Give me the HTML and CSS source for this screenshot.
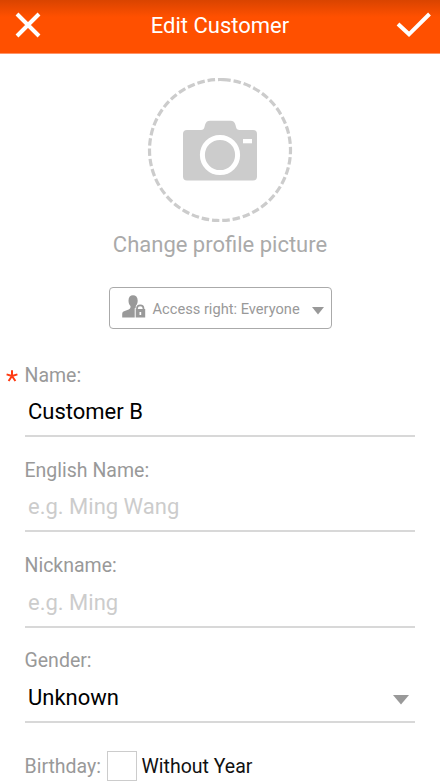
FILE: index.html
```html
<!DOCTYPE html>
<html lang="en">
<head>
<meta charset="utf-8">
<title>Edit Customer</title>
<link rel="stylesheet" href="styles.css">
</head>
<body>
<header class="bar">
  <svg class="close" width="26" height="26" viewBox="0 0 26 26"><path d="M2 2 24 24M24 2 2 24"/></svg>
  <h1><span>Edit Customer</span></h1>
  <svg class="check" width="36" height="26" viewBox="0 0 36 26"><path d="M2 12 13 22.300 33.500 2"/></svg>
</header>
<main>
  <section class="profile">
    <svg class="photo" width="146" height="146" viewBox="0 0 146 146">
      <circle class="ring" cx="73" cy="73" r="70.500" transform="rotate(-87.300 73 73)"/>
      <path class="fill" d="M40 53h14q3 0 3.500-3l.5-2q1-4.300 5-4.300h20.500q4 0 5 4.300l.5 2q.5 3 3.500 3h13.500q4 0 4 4v42.500q0 4-4 4H40q-4 0-4-4V57q0-4 4-4z"/>
      <circle class="lens" cx="73" cy="78" r="17.600"/>
      <path class="flash" d="M96 62h9v4.300h-9z"/>
    </svg>
    <p class="change"><span>Change profile picture</span></p>
    <button class="access">
      <svg width="24" height="24" viewBox="0 0 24 24">
        <path class="person" d="M6.500 5.500C6.500 2 8.300.3 11 .3s4.700 1.700 4.700 5.200c0 2.800-.8 4.300-1.900 5.500v2.500l.6 1.200V22.500H.2v-3.300c0-2 .8-2.600 2.500-3.200l4-1.500q1.800-.6 1.800-2.200V11c-1.300-1.300-2-3-2-5.500z"/>
        <path class="gap" d="M12.700 13.300h1q.2-4.500 4.800-4.500t4.800 4.500h1V24H12.700z"/>
        <path class="shackle" d="M15 14.500v-1c0-4.300 6.500-4.300 6.500 0v1"/>
        <path class="person" d="M13.700 14h9.500v8.500h-9.500z"/>
        <path class="hole" d="M17.500 17h1.700v3h-1.700z"/>
      </svg>
      <span class="atext">Access right: Everyone</span>
      <svg class="caret" width="12" height="8" viewBox="0 0 12 8"><path d="M0 0h12L6 7.500z"/></svg>
    </button>
  </section>
  <form>
    <div class="field"><label><svg class="star" width="12" height="12" viewBox="0 0 12 12"><path d="M6 6V.3M6 6 .6 4.400M6 6l5.400-1.600M6 6 2.600 11M6 6l3.400 5"/></svg>Name:</label><div class="value">Customer B</div></div>
    <div class="field"><label>English Name:</label><div class="value hint">e.g. Ming Wang</div></div>
    <div class="field"><label>Nickname:</label><div class="value hint">e.g. Ming</div></div>
    <div class="field"><label>Gender:</label><div class="value">Unknown<svg class="arrow" width="16" height="10" viewBox="0 0 16 10"><path d="M0 0h16L8 9.500z"/></svg></div></div>
    <div class="birthday"><span class="blabel">Birthday:</span><i class="box"></i><span class="without">Without Year</span></div>
  </form>
</main>
</body>
</html>
```
FILE: styles.css
```css
* { box-sizing: border-box; }
body { margin: 0; height: 782px; overflow: hidden; background: #fff; font-family: Roboto, sans-serif; color: #111; }
svg { display: block; flex: none; }
.bar { height: 54px; padding: 0 10px 3px 15px; display: flex; align-items: center; background: linear-gradient(#d94400, #ff5000 17px); border-bottom: 1px solid #ff9468; }
.bar h1 { flex: 1; margin: 0; padding: 1px 0 0 3px; text-align: center; font-size: 22px; line-height: 28px; font-weight: 400; color: #fff; }
.bar path { fill: none; stroke: #fff; stroke-width: 4; }
.bar .check { margin-right: -2px; }
.profile { display: flex; flex-direction: column; align-items: center; padding-top: 23px; }
.ring { fill: none; stroke: #ccc; stroke-width: 3.200; stroke-dasharray: 7.500 2.900; }
.fill { fill: #ccc; }
.lens { fill: #ccc; stroke: #fff; stroke-width: 5; }
.flash { fill: #fff; }
.change { margin: 8px 0 0; font-size: 22px; line-height: 28px; color: #aaa; }
.access { width: 223px; height: 42px; margin: 28px 0 0; padding: 0 7px 0 12px; border: 1.500px solid #aaa; border-radius: 4px; background: #fff; display: flex; align-items: center; font-family: inherit; font-size: 14.650px; color: #999; }
.access > svg:first-child { margin-top: -3px; }
.atext { margin: 2px 0 0 7px; white-space: nowrap; }
.caret { margin: 6px 0 0 auto; }
.person, .caret path, .arrow path { fill: #999; }
.gap, .hole { fill: #fff; }
.shackle { fill: none; stroke: #999; stroke-width: 1.700; }
form { padding: 32px 25px 0 24.500px; }
.field { height: 95.300px; }
.field label { display: block; position: relative; padding-top: .6px; font-size: 19.500px; line-height: 27.400px; color: #999; }
.star { position: absolute; left: -18.500px; top: 8.500px; }
.star path { fill: none; stroke: #ff3b12; stroke-width: 2; }
.value { height: 48px; padding: 0 6px 0 3.500px; display: flex; align-items: center; justify-content: space-between; border-bottom: 2px solid #d8d8d8; font-size: 22px; line-height: 46px; color: #000; }
.hint { color: #ccc; }
.arrow { margin-top: 4px; }
.birthday { display: flex; align-items: center; height: 30px; margin-top: 9px; font-size: 19.500px; white-space: nowrap; }
.blabel { color: #999; }
.box { width: 30px; height: 30px; margin: 0 5px 0 5.500px; border: 1.500px solid #ccc; flex: none; }
```
